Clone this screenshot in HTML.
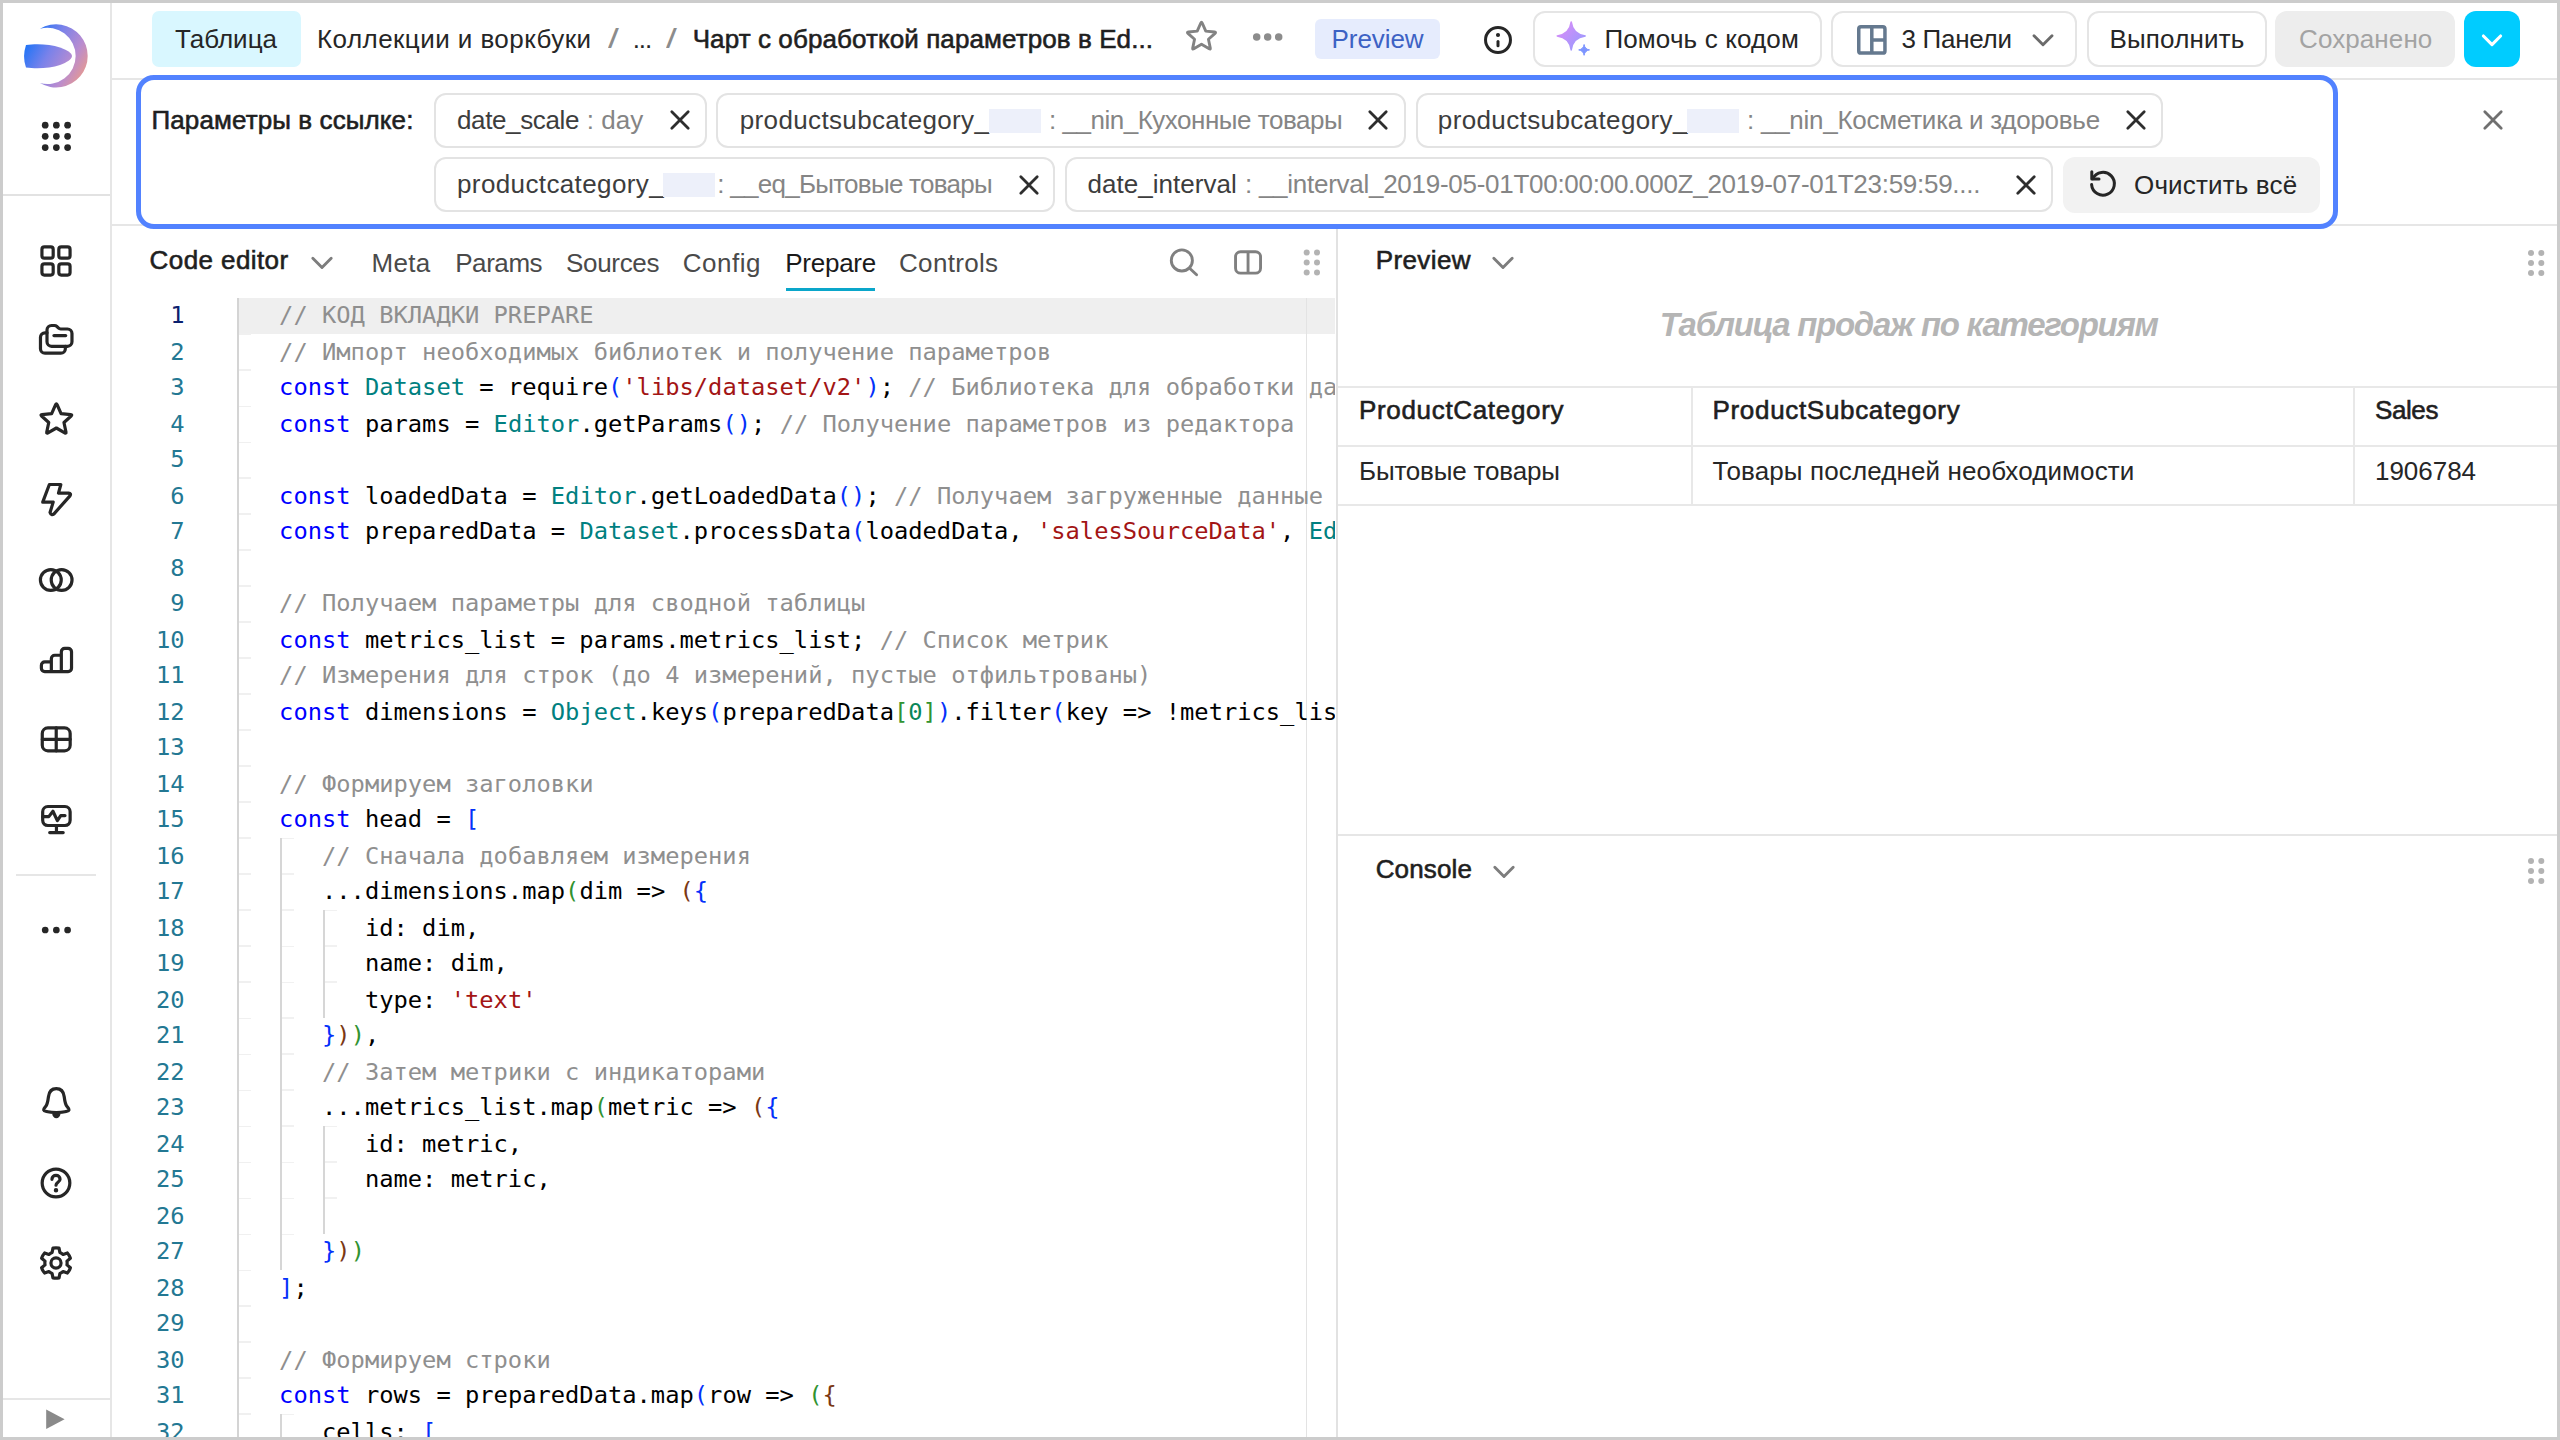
<!DOCTYPE html>
<html lang="ru">
<head>
<meta charset="utf-8">
<title>Чарт с обработкой параметров в Editor</title>
<style>
html,body{margin:0;padding:0;}
body{width:2560px;height:1440px;position:relative;overflow:hidden;background:#fff;
  font-family:"Liberation Sans",sans-serif;font-size:26px;color:#262626;}
div,span,svg{box-sizing:border-box;}
.a{position:absolute;}
.t{position:absolute;white-space:pre;}
.m{-webkit-text-stroke:0.6px currentColor;}
.ln{position:absolute;background:#e6e6e6;}
.frame{position:absolute;left:0;top:0;width:2560px;height:1440px;border:3px solid #ccc;z-index:50;pointer-events:none;}
.ico{position:absolute;fill:none;stroke:#262626;stroke-width:1.42;stroke-linecap:round;stroke-linejoin:round;}
.btn{position:absolute;top:11px;height:56px;border:2px solid #e5e5e5;border-radius:12px;background:#fff;}
.chip{position:absolute;height:55px;border:2px solid #e3e3e3;border-radius:12px;background:#fff;}
.k{color:#3d3d3d;}
.v{color:#858585;}
.red{position:absolute;height:24px;background:#edf0fa;}
.code{position:absolute;left:0;white-space:pre;font-family:"DejaVu Sans Mono","Liberation Mono",monospace;font-size:23.75px;line-height:36px;height:36px;color:#000;}
.num{position:absolute;left:0;width:184.5px;text-align:right;font-family:"DejaVu Sans Mono","Liberation Mono",monospace;font-size:23.75px;line-height:36px;height:36px;color:#237893;}
.c{color:#8f8f8f;}.kw{color:#0000ff;}.ty{color:#008080;}.s{color:#a31515;}.n{color:#098658;}
.b1{color:#0431fa;}.b2{color:#319331;}.b3{color:#7b3814;}
.guide{position:absolute;width:14px;background:linear-gradient(#d6d6d6,#d6d6d6) 0 0/2px 100% no-repeat,repeating-linear-gradient(to bottom,transparent 0,transparent 34.500px,#f1f1f1 34.500px,#f1f1f1 36px) 0 1px;}

</style>
</head>
<body>
<div class="a" style="left:3px;top:3px;width:107px;height:1434px;background:#fff;"></div>
<div class="ln" style="left:110px;top:3px;width:2px;height:1434px;"></div>
<svg class="a" style="left:16px;top:16px;" width="80" height="80" viewBox="16 16 80 80"><defs><linearGradient id="lg" gradientUnits="userSpaceOnUse" x1="26" y1="44" x2="86" y2="78"><stop offset="0" stop-color="#1f74f7"/><stop offset="0.35" stop-color="#7a82ea"/><stop offset="0.7" stop-color="#b98cd0"/><stop offset="1" stop-color="#ec9b88"/></linearGradient></defs>
<path fill="url(#lg)" d="M40 28.700A31.600 31.600 0 1 1 40 83.100A28.200 28.200 0 1 0 40 28.700Z"/>
<path fill="url(#lg)" d="M26 45C36 43.600 50 44 60 47.500C67 50 72 53 72 56C72 59 67 62.500 60 65C50 68.500 36 69 26 67.500C23.400 60 23.400 52.500 26 45Z"/></svg>
<svg class="a" style="left:36px;top:116px;" width="42" height="42" viewBox="36 116 42 42" fill="#262626"><circle cx="45.2" cy="125.2" r="3.350"/><circle cx="56.35" cy="125.2" r="3.350"/><circle cx="67.6" cy="125.2" r="3.350"/><circle cx="45.2" cy="136.35" r="3.350"/><circle cx="56.35" cy="136.35" r="3.350"/><circle cx="67.6" cy="136.35" r="3.350"/><circle cx="45.2" cy="147.6" r="3.350"/><circle cx="56.35" cy="147.6" r="3.350"/><circle cx="67.6" cy="147.6" r="3.350"/></svg>
<div class="ln" style="left:3px;top:194px;width:107px;height:2px;background:#e2e2e2;"></div>
<svg class="ico" style="left:38.00px;top:242.80px;" width="36" height="36" viewBox="0 0 16 16"><rect x="1.750" y="1.750" width="5" height="5" rx="1.100"/><rect x="9.250" y="1.750" width="5" height="5" rx="1.100"/><rect x="1.750" y="9.250" width="5" height="5" rx="1.100"/><rect x="9.250" y="9.250" width="5" height="5" rx="1.100"/></svg>
<svg class="ico" style="left:38.00px;top:322.00px;" width="36" height="36" viewBox="0 0 16 16"><path d="M6 1.550h1.300a1.500 1.500 0 0 1 1.060.44l.67.67a1.500 1.500 0 0 0 1.060.44H13.100a2 2 0 0 1 2 2V8.800a2 2 0 0 1-2 2H6a2 2 0 0 1-2-2V3.550a2 2 0 0 1 2-2z"/><path d="M4 4.800H3.100a2 2 0 0 0-2 2v5.050a2 2 0 0 0 2 2h7.050a2 2 0 0 0 2-2V10.800"/><path d="M7.100 6.050h5.200"/></svg>
<svg class="ico" style="left:38.00px;top:401.00px;" width="36" height="36" viewBox="0 0 16 16"><path d="M7.83 1.65Q8.16 0.90 8.49 1.65L10.25 5.58L14.53 6.03Q15.34 6.12 14.73 6.67L11.54 9.55L12.43 13.76Q12.60 14.56 11.89 14.15L8.16 12.00L4.43 14.15Q3.72 14.56 3.89 13.76L4.78 9.55L1.59 6.67Q0.98 6.12 1.79 6.03L6.07 5.58Z"/></svg>
<svg class="ico" style="left:38.00px;top:481.00px;" width="36" height="36" viewBox="0 0 16 16"><path d="M5.050 1.550H10.150L9.100 5.400H13.600Q14.900 5.500 14.200 6.600L7.100 14.600Q5.900 15.500 5.350 14L6.750 9.400H2.100Z"/></svg>
<svg class="ico" style="left:38.20px;top:561.60px;" width="36" height="36" viewBox="0 0 16 16"><circle cx="5.700" cy="8" r="4.630"/><circle cx="10.500" cy="8" r="4.630"/></svg>
<svg class="ico" style="left:38.40px;top:641.50px;" width="36" height="36" viewBox="0 0 16 16"><path d="M5.930 8.550H3a1.500 1.500 0 0 0-1.500 1.500v1.400a1.500 1.500 0 0 0 1.500 1.500h10.400a1.500 1.500 0 0 0 1.500-1.500V4.050a1.500 1.500 0 0 0-1.500-1.500h-1.530a1.500 1.500 0 0 0-1.500 1.500v1.600H7.430a1.500 1.500 0 0 0-1.500 1.500zM5.930 8.550v4.400M10.370 5.650v7.300" transform="translate(0 .25)"/></svg>
<svg class="ico" style="left:38.25px;top:722.40px;" width="36" height="36" viewBox="0 0 16 16"><rect x="1.900" y="2.650" width="12.400" height="10.150" rx="2.500"/><path d="M8.100 2.650v10.150M1.900 7.700h12.400"/></svg>
<svg class="ico" style="left:38.45px;top:802.00px;" width="36" height="36" viewBox="0 0 16 16"><rect x="2.080" y="2" width="12.200" height="8.450" rx="2.300"/><path d="M8.200 10.450v3.150M5.200 13.600h6"/><path d="M2.100 6.500h2.700l1.850-2.400 1.950 4.200 1.500-2.250h1.900"/></svg>
<div class="ln" style="left:16px;top:874px;width:80px;height:2px;"></div>
<svg class="a" style="left:36px;top:920px;" width="42" height="20" viewBox="36 920 42 20" fill="#262626"><circle cx="45.200" cy="930" r="3.350"/><circle cx="56.350" cy="930" r="3.350"/><circle cx="67.600" cy="930" r="3.350"/></svg>
<svg class="ico" style="left:38.00px;top:1085.00px;" width="36" height="36" viewBox="0 0 16 16"><path d="M8.150 1.650C5.900 1.650 4.900 3.300 4.650 5.200C4.400 7.200 4.200 8.600 3.400 9.600C2.900 10.200 2.400 10.600 2.500 11.100C2.700 11.900 5.500 12.250 8.150 12.250C10.800 12.250 13.600 11.900 13.800 11.100C13.900 10.600 13.400 10.200 12.900 9.600C12.100 8.600 11.900 7.200 11.650 5.200C11.400 3.300 10.400 1.650 8.150 1.650Z"/><path d="M6.300 12.900h3.700c-.2 1.200-.9 1.850-1.850 1.850s-1.650-.65-1.850-1.850z" fill="#262626" stroke="none"/></svg>
<svg class="ico" style="left:38.35px;top:1165.20px;" width="36" height="36" viewBox="0 0 16 16"><circle cx="8" cy="8" r="6.150"/><path d="M6.200 6.350c0-1 .8-1.700 1.800-1.700s1.800.7 1.800 1.700c0 1.300-1.800 1.400-1.800 2.600"/><circle cx="8" cy="11.200" r=".6" fill="#262626" stroke-width=".8"/></svg>
<svg class="ico" style="left:38.35px;top:1244.70px;" width="36" height="36" viewBox="0 0 16 16"><path d="M6.27 3.36L6.65 1.39A6.75 6.75 0 0 1 9.35 1.39L9.73 3.36A4.95 4.95 0 0 1 11.15 4.18L13.06 3.53A6.75 6.75 0 0 1 14.40 5.86L12.88 7.18A4.95 4.95 0 0 1 12.88 8.82L14.40 10.14A6.75 6.75 0 0 1 13.06 12.47L11.15 11.82A4.95 4.95 0 0 1 9.73 12.64L9.35 14.61A6.75 6.75 0 0 1 6.65 14.61L6.27 12.64A4.95 4.95 0 0 1 4.85 11.82L2.94 12.47A6.75 6.75 0 0 1 1.60 10.14L3.12 8.82A4.95 4.95 0 0 1 3.12 7.18L1.60 5.86A6.75 6.75 0 0 1 2.94 3.53L4.85 4.18A4.95 4.95 0 0 1 6.27 3.36Z"/><circle cx="8" cy="8" r="2.250"/></svg>
<div class="ln" style="left:3px;top:1398px;width:107px;height:2px;"></div>
<svg class="a" style="left:44px;top:1407px;" width="24" height="24" viewBox="44 1407 24 24"><path d="M46.200 1409.600L64.600 1419.200L46.200 1428.900Z" fill="#8a8a8a"/></svg>
<div class="ln" style="left:112px;top:78px;width:2445px;height:2px;"></div>
<div class="a" style="left:152px;top:11px;width:149px;height:56px;border-radius:7px;background:#d9f7ff;"></div>
<div class="t" style="left:175.0px;top:22.5px;line-height:32px;height:32px;letter-spacing:0.01px;">Таблица</div>
<div class="t" style="left:317.0px;top:22.5px;line-height:32px;height:32px;letter-spacing:0.44px;">Коллекции и воркбуки</div>
<div class="t" style="left:607.5px;top:22.5px;line-height:32px;height:32px;color:#8c8c8c;transform:scale(1.500,1.060);transform-origin:0 60%;">/</div>
<div class="t" style="left:632.7px;top:22.5px;line-height:32px;height:32px;letter-spacing:-1.12px;">...</div>
<div class="t" style="left:665.5px;top:22.5px;line-height:32px;height:32px;color:#8c8c8c;transform:scale(1.500,1.060);transform-origin:0 60%;">/</div>
<div class="t m" style="left:692.7px;top:22.5px;line-height:32px;height:32px;letter-spacing:0.09px;color:#1f1f1f;">Чарт с обработкой параметров в Ed...</div>
<svg class="ico" style="left:1177px;top:12px;stroke:#828282;stroke-width:2.900;" width="48" height="48" viewBox="1177 12 48 48"><path d="M1200.81 22.99Q1201.50 21.45 1202.19 22.99L1205.79 31.09L1214.61 32.02Q1216.29 32.19 1215.03 33.32L1208.44 39.26L1210.29 47.93Q1210.64 49.58 1209.18 48.74L1201.50 44.30L1193.82 48.74Q1192.36 49.58 1192.71 47.93L1194.56 39.26L1187.97 33.32Q1186.71 32.19 1188.39 32.02L1197.21 31.09Z"/></svg>
<svg class="a" style="left:1250px;top:27px;" width="36" height="20" viewBox="1250 27 36 20" fill="#8c8c8c"><circle cx="1256.700" cy="37" r="3.750"/><circle cx="1267.700" cy="37" r="3.750"/><circle cx="1278.700" cy="37" r="3.750"/></svg>
<div class="a" style="left:1315px;top:19px;width:125px;height:40px;border-radius:6px;background:#e6ecfd;"></div>
<div class="t" style="left:1331.6px;top:22.8px;line-height:32px;height:32px;letter-spacing:-0.07px;color:#3d62c4;">Preview</div>
<svg class="ico" style="left:1482.600px;top:24.800px;stroke-width:1.600;" width="30" height="30" viewBox="0 0 16 16"><circle cx="8" cy="8" r="6.650"/><path d="M8 8.800v2.300"/><circle cx="8" cy="5.300" r=".65" fill="#262626" stroke-width=".9"/></svg>
<div class="btn" style="left:1533px;width:289px;"></div>
<svg class="a" style="left:1550px;top:15px;" width="48" height="48" viewBox="1550 15 48 48"><defs><linearGradient id="spk" gradientUnits="userSpaceOnUse" x1="1558" y1="24" x2="1586" y2="50"><stop offset="0" stop-color="#dd8cf7"/><stop offset="1" stop-color="#8f9bff"/></linearGradient></defs><path fill="url(#spk)" stroke="url(#spk)" stroke-width="1.500" stroke-linejoin="round" d="M1571.20 21.90C1572.18 29.74 1577.36 34.92 1585.20 35.90C1577.36 36.88 1572.18 42.06 1571.20 49.90C1570.22 42.06 1565.04 36.88 1557.20 35.90C1565.04 34.92 1570.22 29.74 1571.20 21.90Z"/><path fill="#7d95ff" stroke="#7d95ff" stroke-width="1" stroke-linejoin="round" d="M1584.10 44.50C1584.48 47.52 1586.48 49.52 1589.50 49.90C1586.48 50.28 1584.48 52.28 1584.10 55.30C1583.72 52.28 1581.72 50.28 1578.70 49.90C1581.72 49.52 1583.72 47.52 1584.10 44.50Z"/></svg>
<div class="t" style="left:1604.4px;top:22.5px;line-height:32px;height:32px;letter-spacing:0.15px;">Помочь с кодом</div>
<div class="btn" style="left:1831px;width:246px;"></div>
<svg class="a" style="left:1852px;top:20px;fill:none;stroke:#65798f;stroke-width:3.500;" width="40" height="40" viewBox="1852 20 40 40"><rect x="1858.750" y="26.800" width="26.200" height="26.300" rx="2.200"/><path d="M1871.800 26.800v26.300M1871.800 40h13.150"/></svg>
<div class="t" style="left:1901.4px;top:22.5px;line-height:32px;height:32px;letter-spacing:-0.26px;">3 Панели</div>
<svg class="ico" style="left:2027px;top:24px;stroke:#6b6b6b;" width="32" height="32" viewBox="0 0 16 16"><path d="M3.500 5.900l4.500 4.500 4.500-4.500"/></svg>
<div class="btn" style="left:2087px;width:180px;"></div>
<div class="t" style="left:2109.5px;top:22.5px;line-height:32px;height:32px;letter-spacing:0.16px;">Выполнить</div>
<div class="a" style="left:2275px;top:11px;width:180px;height:56px;border-radius:12px;background:#ededed;"></div>
<div class="t" style="left:2299.0px;top:22.5px;line-height:32px;height:32px;letter-spacing:0.10px;color:#a3a3a3;">Сохранено</div>
<div class="a" style="left:2464px;top:11px;width:56px;height:56px;border-radius:12px;background:#00ccff;"></div>
<svg class="ico" style="left:2476px;top:24px;stroke:#fff;stroke-width:1.550;" width="32" height="32" viewBox="0 0 16 16"><path d="M3.700 6l4.300 4.300L12.300 6"/></svg>
<div class="ln" style="left:112px;top:224px;width:2445px;height:2px;"></div>
<div class="a" style="left:136px;top:75px;width:2202px;height:154px;border:5px solid #5282ff;border-radius:18px;background:#fff;"></div>
<div class="t m" style="left:151.5px;top:103.5px;line-height:32px;height:32px;letter-spacing:0.10px;color:#1f1f1f;">Параметры в ссылке:</div>
<div class="chip" style="left:434px;top:93px;width:272.5px;"></div>
<div class="t k" style="left:457.0px;top:103.7px;line-height:32px;height:32px;letter-spacing:-0.37px;">date_scale</div>
<div class="t v" style="left:586.7px;top:103.7px;line-height:32px;height:32px;letter-spacing:0.08px;">: day</div>
<svg class="ico" style="left:664px;top:104.3px;stroke:#2e2e2e;stroke-width:1.400;" width="32" height="32" viewBox="0 0 16 16"><path d="M3.900 3.900l8.200 8.200M12.100 3.900l-8.200 8.200"/></svg>
<div class="chip" style="left:715.5px;top:93px;width:690.0px;"></div>
<div class="t k" style="left:739.8px;top:103.7px;line-height:32px;height:32px;letter-spacing:0.35px;">productsubcategory_</div>
<div class="red" style="left:988.500px;top:108.500px;width:52px;"></div>
<div class="t v" style="left:1049.0px;top:103.7px;line-height:32px;height:32px;letter-spacing:-0.48px;">: __nin_Кухонные товары</div>
<svg class="ico" style="left:1361.8px;top:104.3px;stroke:#2e2e2e;stroke-width:1.400;" width="32" height="32" viewBox="0 0 16 16"><path d="M3.900 3.900l8.200 8.200M12.100 3.900l-8.200 8.200"/></svg>
<div class="chip" style="left:1415.5px;top:93px;width:747.5px;"></div>
<div class="t k" style="left:1437.8px;top:103.7px;line-height:32px;height:32px;letter-spacing:0.38px;">productsubcategory_</div>
<div class="red" style="left:1687px;top:108.500px;width:52px;"></div>
<div class="t v" style="left:1747.0px;top:103.7px;line-height:32px;height:32px;letter-spacing:-0.26px;">: __nin_Косметика и здоровье</div>
<svg class="ico" style="left:2119.9px;top:104.3px;stroke:#2e2e2e;stroke-width:1.400;" width="32" height="32" viewBox="0 0 16 16"><path d="M3.900 3.900l8.200 8.200M12.100 3.900l-8.200 8.200"/></svg>
<div class="chip" style="left:434px;top:157px;width:621px;"></div>
<div class="t k" style="left:457.0px;top:168.0px;line-height:32px;height:32px;letter-spacing:0.38px;">productcategory_</div>
<div class="red" style="left:663.250px;top:173px;width:51.500px;"></div>
<div class="t v" style="left:717.3px;top:168.0px;line-height:32px;height:32px;letter-spacing:-0.73px;">: __eq_Бытовые товары</div>
<svg class="ico" style="left:1012.5px;top:168.5px;stroke:#2e2e2e;stroke-width:1.400;" width="32" height="32" viewBox="0 0 16 16"><path d="M3.900 3.900l8.200 8.200M12.100 3.900l-8.200 8.200"/></svg>
<div class="chip" style="left:1064.5px;top:157px;width:988.5px;"></div>
<div class="t k" style="left:1087.6px;top:168.0px;line-height:32px;height:32px;letter-spacing:0.02px;">date_interval</div>
<div class="t v" style="left:1245.0px;top:168.0px;line-height:32px;height:32px;letter-spacing:-0.27px;">: __interval_2019-05-01T00:00:00.000Z_2019-07-01T23:59:59....</div>
<svg class="ico" style="left:2009.7px;top:168.5px;stroke:#2e2e2e;stroke-width:1.400;" width="32" height="32" viewBox="0 0 16 16"><path d="M3.900 3.900l8.200 8.200M12.100 3.900l-8.200 8.200"/></svg>
<div class="a" style="left:2062.500px;top:157px;width:257.500px;height:56px;border-radius:12px;background:#f2f2f2;"></div>
<svg class="ico" style="left:2086.500px;top:168px;stroke-width:1.500;" width="32" height="32" viewBox="0 0 16 16"><path d="M2.900 5.300A5.700 5.700 0 1 1 2.300 8.300"/><path d="M2.400 1.900v3.600h3.600"/></svg>
<div class="t" style="left:2134.0px;top:168.5px;line-height:32px;height:32px;letter-spacing:0.16px;">Очистить всё</div>
<svg class="ico" style="left:2476.6px;top:104px;stroke:#707070;stroke-width:1.400;" width="32" height="32" viewBox="0 0 16 16"><path d="M3.900 3.900l8.200 8.200M12.100 3.900l-8.200 8.200"/></svg>
<div class="t m" style="left:149.6px;top:243.8px;line-height:32px;height:32px;letter-spacing:0.41px;color:#1f1f1f;">Code editor</div>
<svg class="ico" style="left:305.500px;top:247px;stroke:#7d7d7d;stroke-width:1.450;" width="32" height="32" viewBox="0 0 16 16"><path d="M3.400 5.650l4.600 4.600 4.600-4.600"/></svg>
<div class="t" style="left:371.5px;top:246.6px;line-height:32px;height:32px;letter-spacing:0.27px;color:#4a4a4a;">Meta</div>
<div class="t" style="left:455.2px;top:246.6px;line-height:32px;height:32px;letter-spacing:-0.43px;color:#4a4a4a;">Params</div>
<div class="t" style="left:566.0px;top:246.6px;line-height:32px;height:32px;letter-spacing:-0.31px;color:#4a4a4a;">Sources</div>
<div class="t" style="left:682.7px;top:246.6px;line-height:32px;height:32px;letter-spacing:0.52px;color:#4a4a4a;">Config</div>
<div class="t" style="left:785.2px;top:246.6px;line-height:32px;height:32px;letter-spacing:-0.24px;color:#1a1a1a;">Prepare</div>
<div class="t" style="left:899.0px;top:246.6px;line-height:32px;height:32px;letter-spacing:0.33px;color:#4a4a4a;">Controls</div>
<div class="a" style="left:786px;top:288px;width:89px;height:3px;background:#0aa6ca;"></div>
<svg class="a" style="left:1160px;top:240px;fill:none;stroke:#808080;stroke-width:2.900;stroke-linecap:round;" width="48" height="44" viewBox="1160 240 48 44"><circle cx="1181.850" cy="260.400" r="10.550"/><path d="M1189.600 268.200l7 6.600"/></svg>
<svg class="a" style="left:1226px;top:242px;fill:none;stroke:#808080;stroke-width:2.900;" width="44" height="40" viewBox="1226 242 44 40"><rect x="1235.550" y="251.700" width="25" height="21.450" rx="5"/><path d="M1248.050 251.700v21.450"/></svg>
<svg class="a" style="left:1300px;top:246px;" width="24" height="32" viewBox="1300 246 24 32" fill="#b3b3b3"><circle cx="1306.7" cy="252.5" r="3"/><circle cx="1306.7" cy="262.5" r="3"/><circle cx="1306.7" cy="272.5" r="3"/><circle cx="1317" cy="252.5" r="3"/><circle cx="1317" cy="262.5" r="3"/><circle cx="1317" cy="272.5" r="3"/></svg>
<div class="a" style="left:112px;top:226px;width:1223px;height:1211px;overflow:hidden;"><div class="a" style="left:125px;top:72px;width:1098px;height:36px;background:#efefef;"></div>
<div class="a" style="left:125px;top:72px;width:2px;height:1150px;background:#d4d4d4;"></div>
<div class="a" style="left:1193.500px;top:72px;width:1.500px;height:1150px;background:#e3e3e3;"></div>
<div class="a" style="left:127px;top:73px;width:12px;height:1150px;background:repeating-linear-gradient(to bottom,transparent 0,transparent 34.500px,#f0f0f0 34.500px,#f0f0f0 36px);"></div>
<div class="num" style="top:71px;width:72.500px;color:#0b216f;">1</div>
<div class="code" style="left:167.100px;top:71px;"><span class="c">// КОД ВКЛАДКИ PREPARE</span></div>
<div class="num" style="top:108px;width:72.500px;">2</div>
<div class="code" style="left:167.100px;top:108px;"><span class="c">// Импорт необходимых библиотек и получение параметров</span></div>
<div class="num" style="top:143px;width:72.500px;">3</div>
<div class="code" style="left:167.100px;top:143px;"><span class="kw">const</span> <span class="ty">Dataset</span> = require<span class="b1">(</span><span class="s">&#x27;libs/dataset/v2&#x27;</span><span class="b1">)</span>; <span class="c">// Библиотека для обработки данных из датасета</span></div>
<div class="num" style="top:180px;width:72.500px;">4</div>
<div class="code" style="left:167.100px;top:180px;"><span class="kw">const</span> params = <span class="ty">Editor</span>.getParams<span class="b1">(</span><span class="b1">)</span>; <span class="c">// Получение параметров из редактора</span></div>
<div class="num" style="top:215px;width:72.500px;">5</div>
<div class="num" style="top:252px;width:72.500px;">6</div>
<div class="code" style="left:167.100px;top:252px;"><span class="kw">const</span> loadedData = <span class="ty">Editor</span>.getLoadedData<span class="b1">(</span><span class="b1">)</span>; <span class="c">// Получаем загруженные данные</span></div>
<div class="num" style="top:287px;width:72.500px;">7</div>
<div class="code" style="left:167.100px;top:287px;"><span class="kw">const</span> preparedData = <span class="ty">Dataset</span>.processData<span class="b1">(</span>loadedData, <span class="s">&#x27;salesSourceData&#x27;</span>, <span class="ty">Editor</span><span class="b1">)</span>;</div>
<div class="num" style="top:324px;width:72.500px;">8</div>
<div class="num" style="top:359px;width:72.500px;">9</div>
<div class="code" style="left:167.100px;top:359px;"><span class="c">// Получаем параметры для сводной таблицы</span></div>
<div class="num" style="top:396px;width:72.500px;">10</div>
<div class="code" style="left:167.100px;top:396px;"><span class="kw">const</span> metrics_list = params.metrics_list; <span class="c">// Список метрик</span></div>
<div class="num" style="top:431px;width:72.500px;">11</div>
<div class="code" style="left:167.100px;top:431px;"><span class="c">// Измерения для строк (до 4 измерений, пустые отфильтрованы)</span></div>
<div class="num" style="top:468px;width:72.500px;">12</div>
<div class="code" style="left:167.100px;top:468px;"><span class="kw">const</span> dimensions = <span class="ty">Object</span>.keys<span class="b1">(</span>preparedData<span class="b2">[</span><span class="n">0</span><span class="b2">]</span><span class="b1">)</span>.filter<span class="b1">(</span>key =&gt; !metrics_list.includes<span class="b2">(</span>key<span class="b2">)</span><span class="b1">)</span>;</div>
<div class="num" style="top:503px;width:72.500px;">13</div>
<div class="num" style="top:540px;width:72.500px;">14</div>
<div class="code" style="left:167.100px;top:540px;"><span class="c">// Формируем заголовки</span></div>
<div class="num" style="top:575px;width:72.500px;">15</div>
<div class="code" style="left:167.100px;top:575px;"><span class="kw">const</span> head = <span class="b1">[</span></div>
<div class="num" style="top:612px;width:72.500px;">16</div>
<div class="code" style="left:167.100px;top:612px;">   <span class="c">// Сначала добавляем измерения</span></div>
<div class="num" style="top:647px;width:72.500px;">17</div>
<div class="code" style="left:167.100px;top:647px;">   ...dimensions.map<span class="b2">(</span>dim =&gt; <span class="b3">(</span><span class="b1">{</span></div>
<div class="num" style="top:684px;width:72.500px;">18</div>
<div class="code" style="left:167.100px;top:684px;">      id: dim,</div>
<div class="num" style="top:719px;width:72.500px;">19</div>
<div class="code" style="left:167.100px;top:719px;">      name: dim,</div>
<div class="num" style="top:756px;width:72.500px;">20</div>
<div class="code" style="left:167.100px;top:756px;">      type: <span class="s">&#x27;text&#x27;</span></div>
<div class="num" style="top:791px;width:72.500px;">21</div>
<div class="code" style="left:167.100px;top:791px;">   <span class="b1">}</span><span class="b3">)</span><span class="b2">)</span>,</div>
<div class="num" style="top:828px;width:72.500px;">22</div>
<div class="code" style="left:167.100px;top:828px;">   <span class="c">// Затем метрики с индикаторами</span></div>
<div class="num" style="top:863px;width:72.500px;">23</div>
<div class="code" style="left:167.100px;top:863px;">   ...metrics_list.map<span class="b2">(</span>metric =&gt; <span class="b3">(</span><span class="b1">{</span></div>
<div class="num" style="top:900px;width:72.500px;">24</div>
<div class="code" style="left:167.100px;top:900px;">      id: metric,</div>
<div class="num" style="top:935px;width:72.500px;">25</div>
<div class="code" style="left:167.100px;top:935px;">      name: metric,</div>
<div class="num" style="top:972px;width:72.500px;">26</div>
<div class="num" style="top:1007px;width:72.500px;">27</div>
<div class="code" style="left:167.100px;top:1007px;">   <span class="b1">}</span><span class="b3">)</span><span class="b2">)</span></div>
<div class="num" style="top:1044px;width:72.500px;">28</div>
<div class="code" style="left:167.100px;top:1044px;"><span class="b1">]</span>;</div>
<div class="num" style="top:1079px;width:72.500px;">29</div>
<div class="num" style="top:1116px;width:72.500px;">30</div>
<div class="code" style="left:167.100px;top:1116px;"><span class="c">// Формируем строки</span></div>
<div class="num" style="top:1151px;width:72.500px;">31</div>
<div class="code" style="left:167.100px;top:1151px;"><span class="kw">const</span> rows = preparedData.map<span class="b1">(</span>row =&gt; <span class="b2">(</span><span class="b3">{</span></div>
<div class="num" style="top:1188px;width:72.500px;">32</div>
<div class="code" style="left:167.100px;top:1188px;">   cells: <span class="b1">[</span></div>
<div class="guide" style="left:168.3px;top:612px;height:432px;"></div>
<div class="guide" style="left:211.2px;top:684px;height:108px;"></div>
<div class="guide" style="left:211.2px;top:900px;height:108px;"></div>
<div class="guide" style="left:168.3px;top:1188px;height:72px;"></div></div>
<div class="ln" style="left:1336px;top:229px;width:2px;height:1208px;background:#e2e2e2;"></div>
<div class="t m" style="left:1375.7px;top:243.8px;line-height:32px;height:32px;letter-spacing:0.40px;color:#1f1f1f;">Preview</div>
<svg class="ico" style="left:1486.500px;top:247px;stroke:#7d7d7d;stroke-width:1.450;" width="32" height="32" viewBox="0 0 16 16"><path d="M3.400 5.650l4.600 4.600 4.600-4.600"/></svg>
<svg class="a" style="left:2524.7px;top:246.5px;" width="24" height="32" viewBox="2524.7 246.5 24 32" fill="#b3b3b3"><circle cx="2530.7" cy="252.5" r="3"/><circle cx="2530.7" cy="262.5" r="3"/><circle cx="2530.7" cy="272.5" r="3"/><circle cx="2541.0" cy="252.5" r="3"/><circle cx="2541.0" cy="262.5" r="3"/><circle cx="2541.0" cy="272.5" r="3"/></svg>
<div class="t" style="left:1659.7px;top:305.1px;line-height:40px;height:40px;letter-spacing:-1.27px;font-size:33px;font-weight:700;font-style:italic;color:#b5b5b5;">Таблица продаж по категориям</div>
<div class="ln" style="left:1338px;top:386px;width:1219px;height:2px;background:#e8e8e8;"></div>
<div class="ln" style="left:1338px;top:445px;width:1219px;height:2px;background:#e8e8e8;"></div>
<div class="ln" style="left:1338px;top:504px;width:1219px;height:2px;background:#e8e8e8;"></div>
<div class="ln" style="left:1691px;top:386px;width:2px;height:120px;background:#e8e8e8;"></div>
<div class="ln" style="left:2353px;top:386px;width:2px;height:120px;background:#e8e8e8;"></div>
<div class="t m" style="left:1359.0px;top:394.2px;line-height:32px;height:32px;letter-spacing:0.67px;color:#1f1f1f;">ProductCategory</div>
<div class="t m" style="left:1712.5px;top:394.2px;line-height:32px;height:32px;letter-spacing:0.68px;color:#1f1f1f;">ProductSubcategory</div>
<div class="t m" style="left:2375.0px;top:394.2px;line-height:32px;height:32px;letter-spacing:-0.41px;color:#1f1f1f;">Sales</div>
<div class="t" style="left:1359.0px;top:454.7px;line-height:32px;height:32px;letter-spacing:-0.18px;">Бытовые товары</div>
<div class="t" style="left:1712.5px;top:454.7px;line-height:32px;height:32px;letter-spacing:0.12px;">Товары последней необходимости</div>
<div class="t" style="left:2375.0px;top:454.7px;line-height:32px;height:32px;letter-spacing:-0.03px;">1906784</div>
<div class="ln" style="left:1338px;top:834px;width:1219px;height:2px;background:#e6e6e6;"></div>
<div class="t m" style="left:1375.7px;top:852.5px;line-height:32px;height:32px;letter-spacing:0.13px;color:#1f1f1f;">Console</div>
<svg class="ico" style="left:1487.500px;top:855.500px;stroke:#7d7d7d;stroke-width:1.450;" width="32" height="32" viewBox="0 0 16 16"><path d="M3.400 5.650l4.600 4.600 4.600-4.600"/></svg>
<svg class="a" style="left:2524.7px;top:854.5px;" width="24" height="32" viewBox="2524.7 854.5 24 32" fill="#b3b3b3"><circle cx="2530.7" cy="860.5" r="3"/><circle cx="2530.7" cy="870.5" r="3"/><circle cx="2530.7" cy="880.5" r="3"/><circle cx="2541.0" cy="860.5" r="3"/><circle cx="2541.0" cy="870.5" r="3"/><circle cx="2541.0" cy="880.5" r="3"/></svg>
<div class="frame"></div>
</body>
</html>
